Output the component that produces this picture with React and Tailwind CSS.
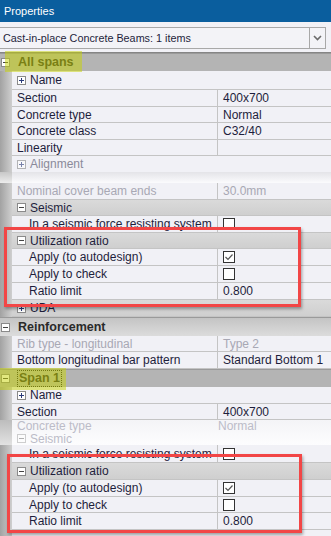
import React from "react";

const txt = "text-[#1e1e3c]";

function Box({ sign, className = "" }) {
  return (
    <span
      className={`inline-flex items-center justify-center w-[9px] h-[9px] border border-[#8a8a8a] bg-white shrink-0 ${className}`}
    >
      {sign === "+" ? (
        <svg width="7" height="7" viewBox="0 0 7 7">
          <path d="M1 3.5h5M3.5 1v5" stroke="#2a3a7a" strokeWidth="1" />
        </svg>
      ) : (
        <svg width="7" height="7" viewBox="0 0 7 7">
          <path d="M1 3.5h5" stroke="#444" strokeWidth="1" />
        </svg>
      )}
    </span>
  );
}

function Check({ checked }) {
  return (
    <span className="inline-flex w-[12px] h-[12px] border border-[#333] bg-white items-center justify-center">
      {checked && (
        <svg width="10" height="10" viewBox="0 0 10 10">
          <path d="M1.5 5l2.5 2.5L8.5 2.5" stroke="#555" strokeWidth="1.2" fill="none" />
        </svg>
      )}
    </span>
  );
}

function Gutter() {
  return <div className="w-[12px] shrink-0 self-stretch bg-gradient-to-r from-[#a2a2a2] to-[#cfcfcf]" />;
}

function Row({ label, value, indent, check, checked, h = "h-[17px]", faded }) {
  return (
    <div className={`flex ${h} shrink-0`}>
      <Gutter />
      <div
        className={`w-[206px] shrink-0 flex items-center border-b border-r border-[#c4c4c4] bg-[#f1f1f6] whitespace-nowrap ${
          indent ? "pl-[17px]" : "pl-[5px]"
        } ${faded ? "text-[#a8a8b4]" : txt}`}
      >
        {label}
      </div>
      <div
        className={`flex-1 flex items-center pl-[5px] border-b border-[#c4c4c4] bg-[#f1f1f6] ${
          faded ? "text-[#a8a8b4]" : txt
        }`}
      >
        {check ? <Check checked={checked} /> : value}
      </div>
    </div>
  );
}

function Group({ label, h = "h-[18px]", bg = "bg-[#b4b4b4]", focus }) {
  return (
    <div className={`flex items-center ${h} ${bg} shrink-0 border-t border-[#9a9a9a]`}>
      <Box sign="-" className="ml-[1px]" />
      <span
        className={`ml-[7px] font-bold text-[12.5px] text-[#2a2a2a] px-[1px] leading-[15px] ${
          focus ? "border border-dotted border-[#222]" : ""
        }`}
      >
        {label}
      </span>
    </div>
  );
}

function SubGroup({ label, sign = "-", h = "h-[17px]", plain }) {
  return (
    <div className={`flex ${h} shrink-0`}>
      <Gutter />
      <div
        className={`flex-1 flex items-center pl-[5px] border-b border-[#c4c4c4] ${
          plain ? "bg-[#f1f1f6]" : "bg-gradient-to-b from-[#dadada] to-[#cfcfcf]"
        } ${txt}`}
      >
        <Box sign={sign} />
        <span className="ml-[4px]">{label}</span>
      </div>
    </div>
  );
}

export default function App() {
  return (
    <div className="relative w-[331px] h-[536px] overflow-hidden bg-[#f1f1f6] font-['Liberation_Sans',Arial,sans-serif] text-[12px] flex flex-col">
      {/* title */}
      <div className="h-[22px] shrink-0 bg-[#0a5e9e] text-white text-[11px] flex items-center pl-[4px]">
        Properties
      </div>

      {/* object selector */}
      <div className="h-[31px] shrink-0 pt-[5px] pr-[5px] border-b border-[#858585]">
        <div className="h-[22px] flex border border-[#a8a8a8] bg-[#f3f3f7] border-l-0">
          <div className={`flex-1 flex items-center pl-[3px] text-[10.8px] ${txt}`}>
            Cast-in-place Concrete Beams: 1 items
          </div>
          <div className="w-[16px] border-l border-[#a8a8a8] flex items-center justify-center">
            <svg width="9" height="6" viewBox="0 0 9 6">
              <path d="M1 1l3.5 3.5L8 1" stroke="#6a6a6a" strokeWidth="1.6" fill="none" />
            </svg>
          </div>
        </div>
      </div>

      <Group label="All spans" />
      <SubGroup label="Name" sign="+" h="h-[19px]" plain />
      <Row label="Section" value="400x700" />
      <Row label="Concrete type" value="Normal" h="h-[16px]" />
      <Row label="Concrete class" value="C32/40" />
      <Row label="Linearity" value="" h="h-[16px]" />
      <div className="flex h-[16px] shrink-0">
        <Gutter />
        <div className="flex-1 flex items-center pl-[5px] bg-[#f1f1f6] text-[#8a8a9a]">
          <Box sign="+" className="opacity-60" />
          <span className="ml-[4px]">Alignment</span>
        </div>
      </div>
      <div className="flex h-[11px] shrink-0">
        <div className="w-[12px] bg-gradient-to-b from-[#c8c8c8] to-[#ececec]" />
        <div className="flex-1 bg-gradient-to-b from-[#e4e4e8] to-[#fbfbfd]" />
      </div>
      <Row label="Nominal cover beam ends" value="30.0mm" faded />
      <SubGroup label="Seismic" h="h-[16px]" />
      <Row label="In a seismic force resisting system" check indent />
      <SubGroup label="Utilization ratio" h="h-[16px]" />
      <Row label="Apply (to autodesign)" check checked indent />
      <Row label="Apply to check" check indent />
      <Row label="Ratio limit" value="0.800" indent />
      <SubGroup label="UDA" sign="+" />
      <Group label="Reinforcement" h="h-[19px]" bg="bg-gradient-to-b from-[#c4c4c4] to-[#dcdcdc]" />
      <Row label="Rib type - longitudinal" value="Type 2" h="h-[16px]" faded />
      <Row label="Bottom longitudinal bar pattern" value="Standard Bottom 1" />
      <Group label="Span 1" focus />
      <SubGroup label="Name" sign="+" plain />
      <Row label="Section" value="400x700" h="h-[16px]" />
      <div className="flex h-[25px] shrink-0">
        <div className="w-[12px] bg-gradient-to-b from-[#bdbdbd] to-[#e2e2e2]" />
        <div className="flex-1 flex flex-col bg-gradient-to-b from-[#f4f4f7] to-[#fdfdfe] text-[#bcbcc8] leading-none">
          <div className="h-[12px] flex items-center pl-[5px]">
            <span className="w-[201px]">Concrete type</span>
            <span>Normal</span>
          </div>
          <div className="h-[13px] flex items-center pl-[5px]">
            <Box sign="-" className="opacity-40" />
            <span className="ml-[4px]">Seismic</span>
          </div>
        </div>
      </div>
      <Row label="In a seismic force resisting system" check indent h="h-[18px]" />
      <SubGroup label="Utilization ratio" />
      <Row label="Apply (to autodesign)" check checked indent />
      <Row label="Apply to check" check indent h="h-[16px]" />
      <Row label="Ratio limit" value="0.800" indent />
      <div className="flex-1 flex">
        <Gutter />
        <div className="flex-1 bg-[#f1f1f6]" />
      </div>

      {/* highlights */}
      <div className="absolute left-[5px] top-[51px] w-[77px] h-[21px] bg-[#c8d400]/50" />
      <div className="absolute left-0 top-[368px] w-[66px] h-[22px] bg-[#c8d400]/50" />

      {/* red marks */}
      <div className="absolute left-[4px] top-[227px] w-[297px] h-[80px] border-[3px] border-[#f24646] shadow-[1px_2px_3px_rgba(0,0,0,0.35)]" />
      <div className="absolute left-[7px] top-[454px] w-[295px] h-[79px] border-[3px] border-[#f24646] shadow-[1px_2px_3px_rgba(0,0,0,0.35)]" />
    </div>
  );
}
